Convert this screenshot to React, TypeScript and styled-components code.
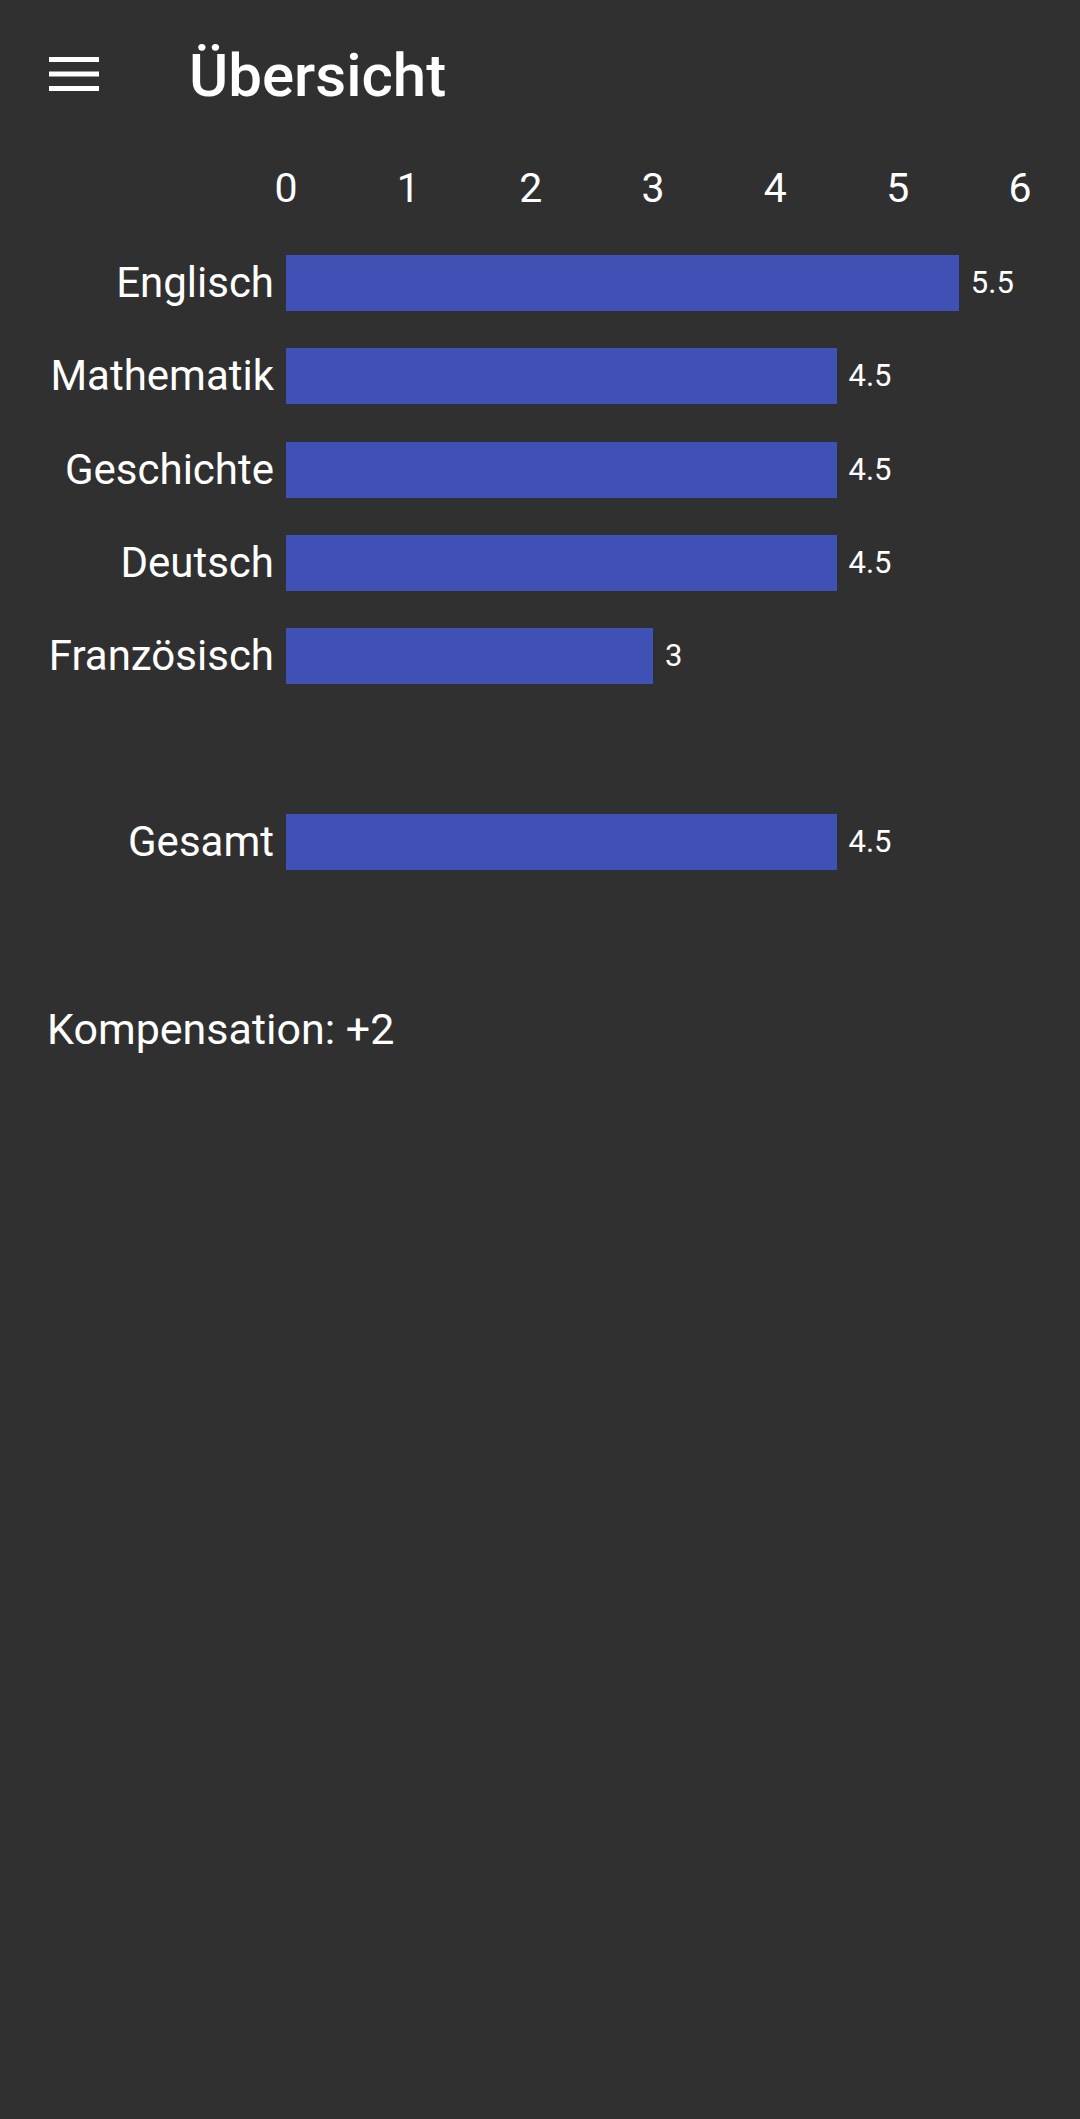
import React from "react";
import styled, { createGlobalStyle } from "styled-components";

const Global = createGlobalStyle`
  html, body { margin: 0; padding: 0; background: #303030; }
  body { font-family: Roboto, "Noto Sans", sans-serif; color: #ffffff; }
`;

const Screen = styled.div`
  width: 1080px;
  min-height: 2119px;
  background: #303030;
  display: flex;
  flex-direction: column;
`;

const Toolbar = styled.header`
  height: 147px;
  display: flex;
  align-items: center;
`;

const MenuButton = styled.button`
  width: 147px;
  height: 147px;
  padding: 0;
  border: none;
  background: transparent;
  display: flex;
  align-items: center;
  justify-content: center;
`;

const Title = styled.h1`
  margin: 5px 0 0 42px;
  font-size: 60px;
  font-weight: 500;
  color: #ffffff;
  line-height: 1;
`;

const Chart = styled.section`
  display: grid;
  grid-template-columns: 274px 734px;
  column-gap: 12px;
  row-gap: 37.2px;
  padding-top: 13px;
`;

const Axis = styled.div`
  grid-column: 2;
  height: 56px;
  margin-bottom: 2px;
  display: flex;
  justify-content: space-between;
  align-items: center;
`;

const Tick = styled.span`
  width: 0;
  display: flex;
  justify-content: center;
  font-size: 41px;
  line-height: 56px;
  white-space: nowrap;
`;

const Label = styled.div`
  grid-column: 1;
  height: 56px;
  line-height: 56px;
  font-size: 42px;
  text-align: right;
  white-space: nowrap;
`;

const Plot = styled.div`
  grid-column: 2;
  height: 56px;
  display: flex;
  align-items: center;
`;

const Bar = styled.div`
  height: 56px;
  background: #3f51b5;
  flex: none;
`;

const Value = styled.span`
  margin-left: 12px;
  font-size: 31px;
  line-height: 56px;
  white-space: nowrap;
`;

const Spacer = styled.div`
  grid-column: 1 / -1;
  height: 56px;
`;

const Note = styled.p`
  margin: 130.4px 0 0 47px;
  font-size: 43px;
  line-height: 56px;
`;

const MAX = 6;
const subjects: [string, number][] = [
  ["Englisch", 5.5],
  ["Mathematik", 4.5],
  ["Geschichte", 4.5],
  ["Deutsch", 4.5],
  ["Französisch", 3],
];

const MenuIcon = () => (
  <svg width="50" height="34" viewBox="0 0 50 34" aria-hidden="true">
    <rect x="0" y="0" width="50" height="5" fill="#fff" />
    <rect x="0" y="14.5" width="50" height="5" fill="#fff" />
    <rect x="0" y="29" width="50" height="5" fill="#fff" />
  </svg>
);

const Row = ({ name, value }: { name: string; value: number }) => (
  <>
    <Label>{name}</Label>
    <Plot>
      <Bar style={{ width: `${(value / MAX) * 100}%` }} />
      <Value>{value}</Value>
    </Plot>
  </>
);

export default function App() {
  return (
    <Screen>
      <Global />
      <Toolbar>
        <MenuButton aria-label="Menü">
          <MenuIcon />
        </MenuButton>
        <Title>Übersicht</Title>
      </Toolbar>
      <Chart>
        <Axis>
          {[0, 1, 2, 3, 4, 5, 6].map((t) => (
            <Tick key={t}>{t}</Tick>
          ))}
        </Axis>
        {subjects.map(([n, v]) => (
          <Row key={n} name={n} value={v} />
        ))}
        <Spacer />
        <Row name="Gesamt" value={4.5} />
      </Chart>
      <Note>Kompensation: +2</Note>
    </Screen>
  );
}
